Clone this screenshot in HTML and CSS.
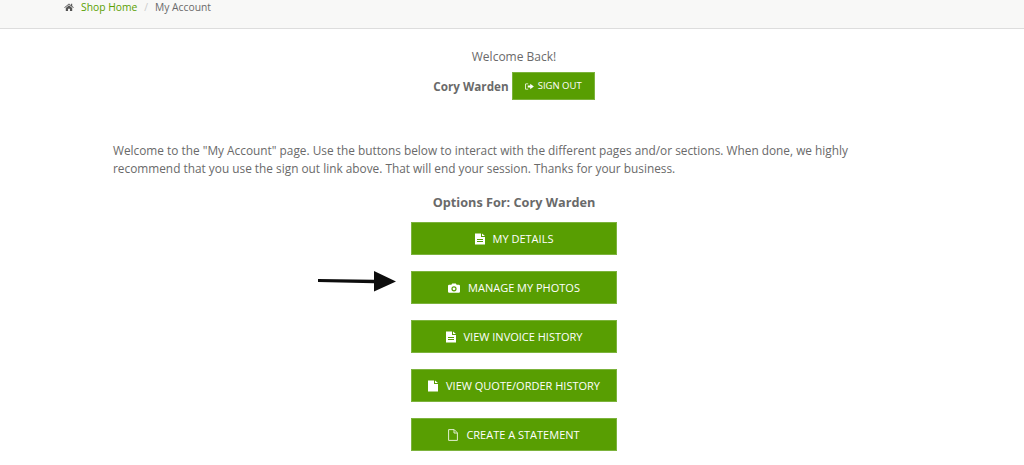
FILE: index.html
```html
<!DOCTYPE html>
<html lang="en">
<head>
    <meta charset="UTF-8">
    <meta name="viewport" content="width=device-width, initial-scale=1.0">
    <title>My Account</title>
    <link rel="stylesheet" href="styles.css">
</head>
<body>
    <nav class="breadcrumb">
        <svg class="home-icon" viewBox="0 0 12 10"><path d="M6 0.5 L8.6 2.7 V1 H10 V3.9 L12 5.6 L11.3 6.3 L6 1.9 L0.7 6.3 L0 5.6 Z M2 6.2 L6 2.9 L10 6.2 V10 H7.2 V7.2 H4.8 V10 H2 Z"/></svg>
        <a href="#">Shop Home</a>
        <span class="sep">/</span>
        <span>My Account</span>
    </nav>

    <main class="account">
        <p class="welcome">Welcome Back!</p>
        <div class="user-row">
            <strong class="user-name">Cory Warden</strong>
            <a class="sign-out" href="#">
                <svg class="sign-out-icon" viewBox="0 0 10 8"><path d="M0 1.5 Q0 0.5 1 0.5 H3.5 V1.4 H1.2 Q0.9 1.4 0.9 1.7 V6.3 Q0.9 6.6 1.2 6.6 H3.5 V7.5 H1 Q0 7.5 0 6.5 Z M3 2.8 H5.8 V0.8 L10 4 L5.8 7.2 V5.2 H3 Z"/></svg>
                SIGN OUT
            </a>
        </div>

        <p class="intro">Welcome to the "My Account" page. Use the buttons below to interact with the different pages and/or sections. When done, we highly recommend that you use the sign out link above. That will end your session. Thanks for your business.</p>

        <h2 class="options-title">Options For: Cory Warden</h2>

        <div class="options">
            <a class="option" href="#">
                <svg class="icon" viewBox="0 0 10 12"><path fill-rule="evenodd" d="M0 0.5 H6 V4 H10 V11.5 H0 Z M2 6 V7 H8 V6 Z M2 8 V9 H8 V8 Z M7 0.5 L10 3 H7 Z"/></svg>
                MY DETAILS
            </a>
            <a class="option" href="#">
                <svg class="icon icon-wide" viewBox="0 0 12 10"><path fill-rule="evenodd" d="M1.2 1.8 H3.4 L4.2 0.4 H7.8 L8.6 1.8 H10.8 Q12 1.8 12 3 V8.6 Q12 9.8 10.8 9.8 H1.2 Q0 9.8 0 8.6 V3 Q0 1.8 1.2 1.8 Z M6 3.2 A2.6 2.6 0 1 0 6 8.4 A2.6 2.6 0 1 0 6 3.2 Z M6 4.4 A1.4 1.4 0 1 1 6 7.2 A1.4 1.4 0 1 1 6 4.4 Z"/></svg>
                MANAGE MY PHOTOS
            </a>
            <a class="option" href="#">
                <svg class="icon" viewBox="0 0 10 12"><path fill-rule="evenodd" d="M0 0.5 H6 V4 H10 V11.5 H0 Z M2 6 V7 H8 V6 Z M2 8 V9 H8 V8 Z M7 0.5 L10 3 H7 Z"/></svg>
                VIEW INVOICE HISTORY
            </a>
            <a class="option" href="#">
                <svg class="icon" viewBox="0 0 10 12"><path d="M0 0.5 H6 V4 H10 V11.5 H0 Z M7 0.5 L10 3 H7 Z"/></svg>
                VIEW QUOTE/ORDER HISTORY
            </a>
            <a class="option" href="#">
                <svg class="icon icon-outline" viewBox="0 0 10 12"><path d="M0.6 0.6 H6.2 L9.4 3.8 V11.4 H0.6 Z M6 0.8 V4 H9.2"/></svg>
                CREATE A STATEMENT
            </a>
        </div>
    </main>

    <svg class="arrow" viewBox="0 0 80 22"><path d="M0 8 L56 8.8 V0 L78 10.5 L56 20.5 V12.2 L0 11 Z"/></svg>
</body>
</html>
```

FILE: styles.css
```css
html, body {
    height: 100%;
}

body {
    font-family: "Open Sans", "Liberation Sans", sans-serif;
    font-size: 12px;
    line-height: 18.5px;
    color: #6a6a6a;
    background-color: #fff;
    margin: 0;
    overflow: hidden;
    position: relative;
}

a {
    text-decoration: none;
}

.breadcrumb {
    display: flex;
    align-items: flex-start;
    height: 28px;
    padding-left: 64px;
    font-size: 10.3px;
    line-height: 15px;
    background-color: #f8f8f7;
    border-bottom: 1px solid #ddd;
}

.breadcrumb a {
    color: #59a000;
}

.home-icon {
    width: 10px;
    height: 8px;
    margin: 3px 7px 0 0;
    fill: #555;
}

.sep {
    color: #ccc;
    margin: 0 7px;
}

.account {
    padding: 19px 0 0 4px;
}

.welcome {
    margin: 0;
    text-align: center;
}

.user-row {
    display: flex;
    justify-content: center;
    align-items: center;
    gap: 3px;
    margin-top: 5px;
}

.user-name {
    font-size: 11.7px;
    padding-top: 1px;
}

.sign-out {
    display: flex;
    align-items: center;
    justify-content: center;
    gap: 4px;
    width: 83px;
    height: 28px;
    padding-top: 2px;
    box-sizing: border-box;
    background-color: #589e02;
    border: 1px solid #7cb33c;
    color: #fff;
    font-size: 9.5px;
}

.sign-out-icon {
    width: 9px;
    height: 7px;
    fill: #fff;
}

.intro {
    width: 770px;
    font-size: 11.85px;
    margin: 41px 0 0 109px;
}

.options-title {
    font-size: 12.7px;
    line-height: 18px;
    font-weight: 700;
    text-align: center;
    margin: 15px 0 0;
}

.options {
    display: flex;
    flex-direction: column;
    align-items: center;
    gap: 16px;
    margin-top: 11px;
}

.option {
    display: flex;
    align-items: center;
    justify-content: center;
    gap: 8px;
    width: 206px;
    height: 33px;
    padding-top: 2px;
    box-sizing: border-box;
    background-color: #589e02;
    border: 1px solid #7cb33c;
    color: #fff;
    font-size: 11px;
}

.icon {
    width: 10px;
    height: 12px;
    fill: #fff;
}

.icon-wide {
    width: 12px;
    height: 10px;
}

.icon-outline {
    fill: none;
    stroke: #e2efd2;
    stroke-width: 1;
}

.arrow {
    position: absolute;
    left: 318px;
    top: 271px;
    width: 80px;
    height: 22px;
    fill: #0d0d0d;
}
```
